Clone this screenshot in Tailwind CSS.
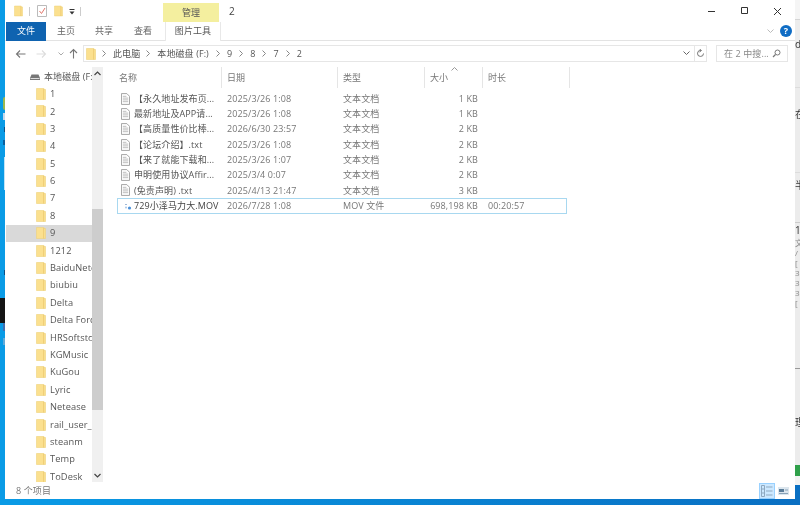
<!DOCTYPE html>
<html>

<head>
    <meta charset="utf-8">
    <script src="https://cdn.jsdelivr.net/npm/@tailwindcss/browser@4"></script>
    <title>2</title>
</head>

<body>
    <!-- shared icons -->
    <svg class="hidden">
        <symbol id="folder" viewBox="0 0 10 12">
            <path d="M0.5 0.5H8V1.5H9.5V11.5H0.5Z" fill="#fbe08f" stroke="#efd27a" stroke-width="0.6" />
            <path d="M7.6 1V11.5" stroke="#e9c46a" stroke-width="0.7" />
        </symbol>
        <symbol id="txt" viewBox="0 0 10 13">
            <path d="M0.5 0.5H6.5L9.5 3.5V12.5H0.5Z" fill="#fff" stroke="#9a9a9a" />
            <path d="M2 3.5H6M2 5.5H8M2 7.5H8M2 9.5H8" stroke="#b5b5b5" />
        </symbol>
        <symbol id="crumb" viewBox="0 0 4 7">
            <path d="M0.5 0.5L3.5 3.5L0.5 6.5" fill="none" stroke="#888" />
        </symbol>
    </svg>

    <div class="flex w-[800px] h-[505px] overflow-hidden bg-linear-to-r from-[#0a9be6] to-[#0a6fc2] blur-[0.3px] font-['Open_Sans','Noto_Sans_CJK_SC',sans-serif] text-[9px] tracking-[0.1px] text-[#666]">

        <!-- desktop, left edge -->
        <div class="flex flex-col w-[5px] shrink-0">
            <div class="h-[97px]"></div>
            <div class="h-[13px] w-[2px] self-end bg-[#9cb84e] rounded-l-full"></div>
            <div class="h-[3px]"></div>
            <div class="h-[7px] w-[2px] self-end bg-[#c7d8ea]"></div>
            <div class="h-[7px]"></div>
            <div class="h-[5px] w-px self-end bg-[#0b4f86]"></div>
            <div class="h-[8px]"></div>
            <div class="h-[5px] w-[2px] self-end bg-[#0b5f9e]"></div>
            <div class="h-[12px]"></div>
            <div class="h-[33px] w-px self-end bg-[#bfe3f7]"></div>
            <div class="h-[80px]"></div>
            <div class="h-[5px] w-px self-end bg-[#0b4f86]"></div>
            <div class="h-[23px]"></div>
            <div class="h-[25px] bg-[#141414]"></div>
            <div class="h-[8px] w-[2px] self-end bg-[#3f6fb0]"></div>
            <div class="h-[7px]"></div>
            <div class="h-[7px] w-[2px] self-end bg-[#5fa9d9]"></div>
        </div>

        <!-- explorer window -->
        <div class="flex flex-col w-[790px] h-[499px] shrink-0 bg-white">

            <!-- title bar -->
            <div class="flex items-start h-[22px]">
                <svg class="w-[9px] h-[12px] ml-[9px] mt-[5px]"><use href="#folder" /></svg>
                <div class="w-px h-[9px] bg-[#ccc] ml-[6px] mt-[7px]"></div>
                <svg class="w-[10px] h-[12px] ml-[7px] mt-[5px]" viewBox="0 0 10 12">
                    <path d="M0.5 0.5H9.5V11.5H0.5Z" fill="#fff" stroke="#bbb" />
                    <path d="M2.5 6L4.5 8.5L8 3" fill="none" stroke="#e4776c" />
                </svg>
                <svg class="w-[9px] h-[12px] ml-[7px] mt-[5px]"><use href="#folder" /></svg>
                <svg class="w-[6px] h-[6px] ml-[6px] mt-[9px]" viewBox="0 0 6 6">
                    <path d="M0.5 0.5H5.5" stroke="#333" />
                    <path d="M0.5 2.5H5.5L3 5.5Z" fill="#333" />
                </svg>
                <div class="w-px h-[9px] bg-[#ccc] ml-[5px] mt-[7px]"></div>
                <div class="flex items-center justify-center w-[56px] h-[19px] mt-[3px] ml-[82px] bg-[#f4ef9f] text-[#555]">管理</div>
                <div class="w-[6px] ml-[10px] mt-[3px] text-[10px] leading-[16px] text-[#444]">2</div>
                <svg class="w-[9px] h-[9px] ml-[472px] mt-[7px]" viewBox="0 0 9 9"><path d="M1 4.5H8" stroke="#333" /></svg>
                <svg class="w-[9px] h-[9px] ml-[23.5px] mt-[6px]" viewBox="0 0 9 9"><path d="M1.5 1.5H7.5V7.5H1.5Z" fill="none" stroke="#333" /></svg>
                <svg class="w-[9px] h-[9px] ml-[24px] mt-[7px]" viewBox="0 0 9 9"><path d="M1 1L8 8M8 1L1 8" stroke="#333" /></svg>
            </div>

            <!-- ribbon tabs -->
            <div class="flex items-center h-[19px] border-b border-[#e3e3e3]">
                <div class="flex items-center justify-center w-[40px] h-[19px] ml-px bg-[#0f63b0] text-white">文件</div>
                <div class="ml-[11px] w-[19px]">主页</div>
                <div class="ml-[19px] w-[19px]">共享</div>
                <div class="ml-[20px] w-[19px]">查看</div>
                <div class="flex items-center justify-center w-[56px] h-[19px] ml-[12px] bg-white border-x border-[#e8e8e8] text-[#555]">图片工具</div>
                <svg class="w-[7px] h-[5px] ml-[546px]" viewBox="0 0 7 5"><path d="M0.5 0.5L3.5 3.5L6.5 0.5" fill="none" stroke="#bbb" /></svg>
                <div class="flex items-center justify-center w-[12px] h-[12px] ml-[6px] rounded-full bg-[#0f6cc4] text-white text-[9px] font-bold">?</div>
            </div>

            <!-- address row -->
            <div class="flex items-center h-[26px] pb-[1px]">
                <svg class="w-[11px] h-[10px] ml-[10px]" viewBox="0 0 11 10"><path d="M10.5 5H1.5M5 1.5L1.5 5L5 8.5" fill="none" stroke="#777" stroke-width="1.1" /></svg>
                <svg class="w-[11px] h-[10px] ml-[10px]" viewBox="0 0 11 10"><path d="M0.5 5H9.5M6 1.5L9.5 5L6 8.5" fill="none" stroke="#ddd" stroke-width="1.1" /></svg>
                <svg class="w-[6px] h-[4px] ml-[11px]" viewBox="0 0 6 4"><path d="M0.5 0.5L3 3L5.5 0.5" fill="none" stroke="#aaa" /></svg>
                <svg class="w-[9px] h-[11px] ml-[5px]" viewBox="0 0 9 11"><path d="M4.5 10.5V1.5M1 5L4.5 1.5L8 5" fill="none" stroke="#777" stroke-width="1.1" /></svg>
                <div class="flex items-center w-[624px] h-[17px] ml-[5px] border border-[#e6e6e6] text-[#555]">
                    <svg class="w-[10px] h-[12px] ml-[2px]"><use href="#folder" /></svg>
                    <svg class="w-[4px] h-[7px] ml-[6px]"><use href="#crumb" /></svg>
                    <span class="ml-[7px]">此电脑</span>
                    <svg class="w-[4px] h-[7px] ml-[6px]"><use href="#crumb" /></svg>
                    <span class="ml-[7px]">本地磁盘 (F:)</span>
                    <svg class="w-[4px] h-[7px] ml-[7px]"><use href="#crumb" /></svg>
                    <span class="ml-[7px]">9</span>
                    <svg class="w-[4px] h-[7px] ml-[7px]"><use href="#crumb" /></svg>
                    <span class="ml-[7px]">8</span>
                    <svg class="w-[4px] h-[7px] ml-[7px]"><use href="#crumb" /></svg>
                    <span class="ml-[7px]">7</span>
                    <svg class="w-[4px] h-[7px] ml-[7px]"><use href="#crumb" /></svg>
                    <span class="ml-[7px]">2</span>
                    <svg class="w-[7px] h-[5px] ml-auto mr-[4px]" viewBox="0 0 7 5"><path d="M0.5 0.5L3.5 3.5L6.5 0.5" fill="none" stroke="#666" /></svg>
                    <div class="flex items-center justify-center w-[12px] h-[15px] border-l border-[#e6e6e6]">
                        <svg class="w-[9px] h-[9px]" viewBox="0 0 9 9"><path d="M7.5 4.5A3 3 0 1 1 5 1.5M3.5 0L5.5 1.5L3.5 3" fill="none" stroke="#777" /></svg>
                    </div>
                </div>
                <div class="flex items-center justify-between w-[72px] h-[17px] ml-[9px] pl-[7px] pr-[6px] border border-[#e6e6e6] text-[#888]">
                    <span>在 2 中搜...</span>
                    <svg class="w-[9px] h-[9px]" viewBox="0 0 9 9"><circle cx="5.5" cy="3.5" r="2.5" fill="none" stroke="#777" /><path d="M3.5 5.5L1 8" stroke="#777" stroke-width="1.2" /></svg>
                </div>
            </div>

            <!-- tree + file list -->
            <div class="flex h-[415px]">
                <div class="flex w-[98px] shrink-0">
                    <div class="flex flex-col w-[87px] pt-[1px] overflow-hidden text-[#555] whitespace-nowrap">
                        <div class="flex items-center h-[17.4px] shrink-0">
                            <svg class="w-[10px] h-[6px] ml-[25px] shrink-0" viewBox="0 0 10 6"><path d="M1.5 0.5H8.5L10 4V6H0V4Z" fill="#777" /><path d="M0.5 4.5H9.5" stroke="#ddd" /></svg>
                            <span class="ml-[4px]">本地磁盘 (F:)</span>
                        </div>
                        <div class="flex items-center h-[17.4px] shrink-0"><svg class="w-[10px] h-[12px] ml-[31px] shrink-0"><use href="#folder" /></svg><span class="ml-[4px] text-[9.25px]">1</span></div>
                        <div class="flex items-center h-[17.4px] shrink-0"><svg class="w-[10px] h-[12px] ml-[31px] shrink-0"><use href="#folder" /></svg><span class="ml-[4px] text-[9.25px]">2</span></div>
                        <div class="flex items-center h-[17.4px] shrink-0"><svg class="w-[10px] h-[12px] ml-[31px] shrink-0"><use href="#folder" /></svg><span class="ml-[4px] text-[9.25px]">3</span></div>
                        <div class="flex items-center h-[17.4px] shrink-0"><svg class="w-[10px] h-[12px] ml-[31px] shrink-0"><use href="#folder" /></svg><span class="ml-[4px] text-[9.25px]">4</span></div>
                        <div class="flex items-center h-[17.4px] shrink-0"><svg class="w-[10px] h-[12px] ml-[31px] shrink-0"><use href="#folder" /></svg><span class="ml-[4px] text-[9.25px]">5</span></div>
                        <div class="flex items-center h-[17.4px] shrink-0"><svg class="w-[10px] h-[12px] ml-[31px] shrink-0"><use href="#folder" /></svg><span class="ml-[4px] text-[9.25px]">6</span></div>
                        <div class="flex items-center h-[17.4px] shrink-0"><svg class="w-[10px] h-[12px] ml-[31px] shrink-0"><use href="#folder" /></svg><span class="ml-[4px] text-[9.25px]">7</span></div>
                        <div class="flex items-center h-[17.4px] shrink-0"><svg class="w-[10px] h-[12px] ml-[31px] shrink-0"><use href="#folder" /></svg><span class="ml-[4px] text-[9.25px]">8</span></div>
                        <div class="flex items-center h-[17.4px] shrink-0 bg-[#d9d9d9] ml-px"><svg class="w-[10px] h-[12px] ml-[30px] shrink-0"><use href="#folder" /></svg><span class="ml-[4px] text-[9.25px]">9</span></div>
                        <div class="flex items-center h-[17.4px] shrink-0"><svg class="w-[10px] h-[12px] ml-[31px] shrink-0"><use href="#folder" /></svg><span class="ml-[4px] text-[9.25px]">1212</span></div>
                        <div class="flex items-center h-[17.4px] shrink-0"><svg class="w-[10px] h-[12px] ml-[31px] shrink-0"><use href="#folder" /></svg><span class="ml-[4px] text-[9.25px]">BaiduNetdisk</span></div>
                        <div class="flex items-center h-[17.4px] shrink-0"><svg class="w-[10px] h-[12px] ml-[31px] shrink-0"><use href="#folder" /></svg><span class="ml-[4px] text-[9.25px]">biubiu</span></div>
                        <div class="flex items-center h-[17.4px] shrink-0"><svg class="w-[10px] h-[12px] ml-[31px] shrink-0"><use href="#folder" /></svg><span class="ml-[4px] text-[9.25px]">Delta</span></div>
                        <div class="flex items-center h-[17.4px] shrink-0"><svg class="w-[10px] h-[12px] ml-[31px] shrink-0"><use href="#folder" /></svg><span class="ml-[4px] text-[9.25px]">Delta Force</span></div>
                        <div class="flex items-center h-[17.4px] shrink-0"><svg class="w-[10px] h-[12px] ml-[31px] shrink-0"><use href="#folder" /></svg><span class="ml-[4px] text-[9.25px]">HRSoftstore</span></div>
                        <div class="flex items-center h-[17.4px] shrink-0"><svg class="w-[10px] h-[12px] ml-[31px] shrink-0"><use href="#folder" /></svg><span class="ml-[4px] text-[9.25px]">KGMusic</span></div>
                        <div class="flex items-center h-[17.4px] shrink-0"><svg class="w-[10px] h-[12px] ml-[31px] shrink-0"><use href="#folder" /></svg><span class="ml-[4px] text-[9.25px]">KuGou</span></div>
                        <div class="flex items-center h-[17.4px] shrink-0"><svg class="w-[10px] h-[12px] ml-[31px] shrink-0"><use href="#folder" /></svg><span class="ml-[4px] text-[9.25px]">Lyric</span></div>
                        <div class="flex items-center h-[17.4px] shrink-0"><svg class="w-[10px] h-[12px] ml-[31px] shrink-0"><use href="#folder" /></svg><span class="ml-[4px] text-[9.25px]">Netease</span></div>
                        <div class="flex items-center h-[17.4px] shrink-0"><svg class="w-[10px] h-[12px] ml-[31px] shrink-0"><use href="#folder" /></svg><span class="ml-[4px] text-[9.25px]">rail_user_data</span></div>
                        <div class="flex items-center h-[17.4px] shrink-0"><svg class="w-[10px] h-[12px] ml-[31px] shrink-0"><use href="#folder" /></svg><span class="ml-[4px] text-[9.25px]">steanm</span></div>
                        <div class="flex items-center h-[17.4px] shrink-0"><svg class="w-[10px] h-[12px] ml-[31px] shrink-0"><use href="#folder" /></svg><span class="ml-[4px] text-[9.25px]">Temp</span></div>
                        <div class="flex items-center h-[17.4px] shrink-0"><svg class="w-[10px] h-[12px] ml-[31px] shrink-0"><use href="#folder" /></svg><span class="ml-[4px] text-[9.25px]">ToDesk</span></div>
                    </div>
                    <!-- tree scrollbar -->
                    <div class="flex flex-col w-[11px] bg-[#f0f0f0]">
                        <div class="flex justify-center h-[142px] pt-[4px]">
                            <svg class="w-[7px] h-[5px]" viewBox="0 0 7 5"><path d="M0.5 4L3.5 1L6.5 4" fill="none" stroke="#444" stroke-width="1.2" /></svg>
                        </div>
                        <div class="h-[201px] bg-[#cdcdcd]"></div>
                        <div class="flex justify-center h-[72px] pt-[63px]">
                            <svg class="w-[7px] h-[5px]" viewBox="0 0 7 5"><path d="M0.5 1L3.5 4L6.5 1" fill="none" stroke="#444" stroke-width="1.2" /></svg>
                        </div>
                    </div>
                </div>

                <!-- file list -->
                <div class="flex flex-col ml-[14px] w-[460px]">
                    <div class="flex h-[21px] text-[#777] relative">
                        <div class="w-[105px] pl-[2px] border-r border-[#e5e5e5] leading-[21px]">名称</div>
                        <div class="w-[116px] pl-[5px] border-r border-[#e5e5e5] leading-[21px]">日期</div>
                        <div class="w-[87px] pl-[5px] border-r border-[#e5e5e5] leading-[21px]">类型</div>
                        <div class="w-[58px] pl-[5px] border-r border-[#e5e5e5] leading-[21px]">大小</div>
                        <div class="w-[87px] pl-[5px] border-r border-[#e5e5e5] leading-[21px]">时长</div>
                        <svg class="absolute left-[334px] top-0 w-[7px] h-[4px]" viewBox="0 0 7 4"><path d="M0.5 3.5L3.5 0.5L6.5 3.5" fill="none" stroke="#999" /></svg>
                    </div>
                    <div class="flex flex-col mt-[3px] text-[#777]">
                        <div class="flex items-center h-[15.3px]">
                            <div class="flex items-center w-[105px] text-[#555]"><svg class="w-[9px] h-[12px] ml-[4px] mr-[4px]"><use href="#txt" /></svg>【永久地址发布页...</div>
                            <div class="w-[116px] pl-[5px]">2025/3/26 1:08</div>
                            <div class="w-[87px] pl-[5px]">文本文档</div>
                            <div class="w-[53px] text-right">1 KB</div>
                        </div>
                        <div class="flex items-center h-[15.3px]">
                            <div class="flex items-center w-[105px] text-[#555]"><svg class="w-[9px] h-[12px] ml-[4px] mr-[4px]"><use href="#txt" /></svg>最新地址及APP请...</div>
                            <div class="w-[116px] pl-[5px]">2025/3/26 1:08</div>
                            <div class="w-[87px] pl-[5px]">文本文档</div>
                            <div class="w-[53px] text-right">1 KB</div>
                        </div>
                        <div class="flex items-center h-[15.3px]">
                            <div class="flex items-center w-[105px] text-[#555]"><svg class="w-[9px] h-[12px] ml-[4px] mr-[4px]"><use href="#txt" /></svg>【高质量性价比棒...</div>
                            <div class="w-[116px] pl-[5px]">2026/6/30 23:57</div>
                            <div class="w-[87px] pl-[5px]">文本文档</div>
                            <div class="w-[53px] text-right">2 KB</div>
                        </div>
                        <div class="flex items-center h-[15.3px]">
                            <div class="flex items-center w-[105px] text-[#555]"><svg class="w-[9px] h-[12px] ml-[4px] mr-[4px]"><use href="#txt" /></svg>【论坛介绍】.txt</div>
                            <div class="w-[116px] pl-[5px]">2025/3/26 1:08</div>
                            <div class="w-[87px] pl-[5px]">文本文档</div>
                            <div class="w-[53px] text-right">2 KB</div>
                        </div>
                        <div class="flex items-center h-[15.3px]">
                            <div class="flex items-center w-[105px] text-[#555]"><svg class="w-[9px] h-[12px] ml-[4px] mr-[4px]"><use href="#txt" /></svg>【来了就能下载和...</div>
                            <div class="w-[116px] pl-[5px]">2025/3/26 1:07</div>
                            <div class="w-[87px] pl-[5px]">文本文档</div>
                            <div class="w-[53px] text-right">2 KB</div>
                        </div>
                        <div class="flex items-center h-[15.3px]">
                            <div class="flex items-center w-[105px] text-[#555]"><svg class="w-[9px] h-[12px] ml-[4px] mr-[4px]"><use href="#txt" /></svg>申明使用协议Affir...</div>
                            <div class="w-[116px] pl-[5px]">2025/3/4 0:07</div>
                            <div class="w-[87px] pl-[5px]">文本文档</div>
                            <div class="w-[53px] text-right">2 KB</div>
                        </div>
                        <div class="flex items-center h-[15.3px]">
                            <div class="flex items-center w-[105px] text-[#555]"><svg class="w-[9px] h-[12px] ml-[4px] mr-[4px]"><use href="#txt" /></svg>(免责声明) .txt</div>
                            <div class="w-[116px] pl-[5px]">2025/4/13 21:47</div>
                            <div class="w-[87px] pl-[5px]">文本文档</div>
                            <div class="w-[53px] text-right">3 KB</div>
                        </div>
                        <div class="flex items-center w-[450px] h-[16px] border border-[#a8d8f0]">
                            <div class="flex items-center w-[104px] text-[#444]"><svg class="w-[8px] h-[7px] ml-[6px] mr-[2px]" viewBox="0 0 8 7"><path d="M1 1.5H3" stroke="#9fb8d8" /><circle cx="5.5" cy="5" r="1.6" fill="#4a90d9" /><circle cx="2" cy="4.5" r="1" fill="#a9c6e8" /></svg>729小泽马力大.MOV</div>
                            <div class="w-[116px] pl-[5px]">2026/7/28 1:08</div>
                            <div class="w-[87px] pl-[5px]">MOV 文件</div>
                            <div class="w-[53px] text-right">698,198 KB</div>
                            <div class="pl-[10px]">00:20:57</div>
                        </div>
                    </div>
                </div>
            </div>

            <!-- status bar -->
            <div class="flex items-center h-[17px] text-[#777]">
                <div class="ml-[11px]">8 个项目</div>
                <div class="flex items-center justify-center w-[16px] h-[16px] ml-auto bg-[#cce8ff] border border-[#99d1ff]">
                    <svg class="w-[12px] h-[12px]" viewBox="0 0 12 12"><path d="M0.5 0.5H3.5V11.5H0.5ZM0.5 4H3.5M0.5 8H3.5M5 2H11.5M5 6H11.5M5 10H11.5" fill="none" stroke="#8fa9c0" /></svg>
                </div>
                <svg class="w-[11px] h-[8px] ml-[3px] mr-[6px]" viewBox="0 0 11 8"><path d="M0 0H11V8H0Z" fill="#dce6ee" /><path d="M1 2H6V5H1Z" fill="#5b7d99" /><path d="M7 3H10M1 6.5H10" stroke="#8aa3b8" /></svg>
            </div>
        </div>

        <!-- background window, right edge -->
        <div class="flex flex-col w-[5px] shrink-0 overflow-hidden bg-[#ececec] text-[#333] text-[10px] leading-[12px] whitespace-nowrap">
            <div class="h-[20px] bg-[#f5f5f5] border-b border-[#d5d5d5]"></div>
            <div class="h-[68px] border-b border-[#dcdcdc] pt-[18px]">d</div>
            <div class="h-[85px] border-b border-[#dcdcdc] pt-[20px]">在</div>
            <div class="h-[50px] border-b border-[#ccc] pt-[6px]">半</div>
            <div class="h-[15px] pt-[1px]">1</div>
            <div class="flex flex-col h-[70px] text-[#888] text-[8px] leading-[10px]">
                <span>文</span><span>/</span><span>[</span><span>3</span><span>3</span><span>3</span><span>[</span>
            </div>
            <div class="h-[60px]"></div>
            <div class="h-[97px] border-t border-[#999] pt-[47px]">理</div>
            <div class="h-[11px] bg-[#2fa04a]"></div>
            <div class="h-[9px] bg-[#f2f2f2]"></div>
            <div class="flex-1 bg-[#0a6fc2]"></div>
        </div>
    </div>
</body>

</html>
